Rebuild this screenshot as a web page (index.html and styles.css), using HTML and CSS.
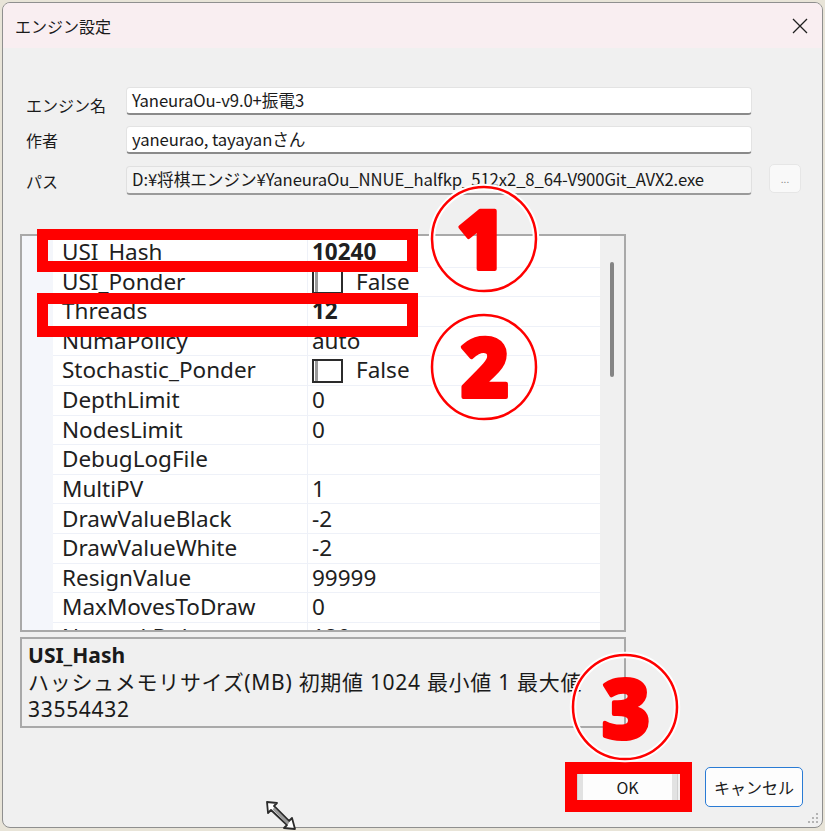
FILE: index.html
```html
<!DOCTYPE html>
<html lang="ja">
<head>
<meta charset="utf-8">
<title>エンジン設定</title>
<link rel="stylesheet" href="styles.css">
</head>
<body>
<div class="dialog">
  <div class="titlebar">
    <span class="title">エンジン設定</span>
    <svg class="close" width="16" height="16" viewBox="0 0 16 16"><path d="M1 1 L15 15 M15 1 L1 15" stroke="#1f1f1f" stroke-width="1.3" fill="none"/></svg>
  </div>
  <div class="form">
    <div class="lbl lbl-first">エンジン名</div>
    <div class="input">YaneuraOu-v9.0+振電3</div>
    <div></div>
    <div class="lbl">作者</div>
    <div class="input">yaneurao, tayayanさん</div>
    <div></div>
    <div class="lbl row3">パス</div>
    <div class="input readonly row3">D:¥将棋エンジン¥YaneuraOu_NNUE_halfkp_512x2_8_64-V900Git_AVX2.exe</div>
    <div class="browse row3">...</div>
  </div>
  <div class="grid">
    <div class="rows">
      <div class="row"><div class="g"></div><div class="n">USI_Hash</div><div class="v b">10240</div></div>
      <div class="row"><div class="g"></div><div class="n">USI_Ponder</div><div class="v"><span class="cb"></span>False</div></div>
      <div class="row"><div class="g"></div><div class="n">Threads</div><div class="v b">12</div></div>
      <div class="row"><div class="g"></div><div class="n">NumaPolicy</div><div class="v">auto</div></div>
      <div class="row"><div class="g"></div><div class="n">Stochastic_Ponder</div><div class="v"><span class="cb"></span>False</div></div>
      <div class="row"><div class="g"></div><div class="n">DepthLimit</div><div class="v">0</div></div>
      <div class="row"><div class="g"></div><div class="n">NodesLimit</div><div class="v">0</div></div>
      <div class="row"><div class="g"></div><div class="n">DebugLogFile</div><div class="v"></div></div>
      <div class="row"><div class="g"></div><div class="n">MultiPV</div><div class="v">1</div></div>
      <div class="row"><div class="g"></div><div class="n">DrawValueBlack</div><div class="v">-2</div></div>
      <div class="row"><div class="g"></div><div class="n">DrawValueWhite</div><div class="v">-2</div></div>
      <div class="row"><div class="g"></div><div class="n">ResignValue</div><div class="v">99999</div></div>
      <div class="row"><div class="g"></div><div class="n">MaxMovesToDraw</div><div class="v">0</div></div>
      <div class="row"><div class="g"></div><div class="n">NetworkDelay</div><div class="v">120</div></div>
    </div>
    <div class="scrollbar"><div class="thumb"></div></div>
  </div>
  <div class="desc">
    <div class="desc-title">USI_Hash</div>
    <div class="desc-text">ハッシュメモリサイズ(MB) 初期値 1024 最小値 1 最大値 33554432</div>
  </div>
  <div class="buttons">
    <button class="btn ok">OK</button>
    <button class="btn cancel">キャンセル</button>
  </div>
  <svg class="grip" width="12" height="12" viewBox="0 0 12 12">
    <g fill="#a0a0a0"><circle cx="10" cy="2" r="1"/><circle cx="6" cy="6" r="1"/><circle cx="10" cy="6" r="1"/><circle cx="2" cy="10" r="1"/><circle cx="6" cy="10" r="1"/><circle cx="10" cy="10" r="1"/></g>
  </svg>
</div>

<svg class="annot" width="825" height="831" viewBox="0 0 825 831">
  <g fill="none" stroke="#ff0000" stroke-width="11">
    <rect x="42.5" y="234.5" width="370" height="32"/>
    <rect x="42.5" y="298.5" width="370" height="33"/>
    <rect x="571" y="768" width="115" height="38" stroke-width="12"/>
  </g>
  <g fill="none" stroke="#ffffff" stroke-width="6.5">
    <circle cx="484" cy="239" r="52"/>
    <circle cx="484" cy="367" r="52"/>
    <circle cx="625" cy="707" r="52"/>
  </g>
  <g fill="none" stroke="#ff0000" stroke-width="2.5">
    <circle cx="484" cy="239" r="52"/>
    <circle cx="484" cy="367" r="52"/>
    <circle cx="625" cy="707" r="52"/>
  </g>
  <g class="num">
    <text x="481" y="269">1</text>
    <text x="485" y="397">2</text>
    <text x="626" y="738">3</text>
  </g>
  <g transform="translate(267 802)">
    <path d="M0 0 L10 1 L7 4 L22 19 L25 16 L28 27 L17 26 L20 23 L4 8 L1 11 Z" fill="#ffffff" stroke="#2b2b2b" stroke-width="1.8" stroke-linejoin="round"/>
    <path d="M6.5 6.5 L21.5 21.5" stroke="#9a9a9a" stroke-width="2.5"/>
  </g>
</svg>
</body>
</html>
```

FILE: styles.css
```css
* { box-sizing: border-box; }

body {
  margin: 0;
  width: 825px;
  height: 831px;
  overflow: hidden;
  position: relative;
  background: #e8e4d8;
  font-family: "Noto Sans CJK JP", sans-serif;
  color: #1a1a1a;
}

.dialog {
  margin: 2px 0 0 2px;
  width: 821px;
  height: 826px;
  border: 1px solid #8f8f8f;
  border-radius: 8px;
  background: #f0f0f0;
  display: flex;
  flex-direction: column;
  position: relative;
  overflow: hidden;
}

.titlebar {
  height: 45px;
  flex: none;
  background: #f9eef1;
  display: flex;
  align-items: center;
  justify-content: space-between;
  padding: 0 14px 0 12px;
}

.title {
  font-size: 16px;
  line-height: 1;
}

.form {
  display: grid;
  grid-template-columns: 100px 626px 49px;
  grid-auto-rows: 28px;
  row-gap: 11px;
  padding: 39px 0 0 23px;
  align-items: center;
}

.lbl {
  font-size: 16px;
  line-height: 1;
}

.lbl-first { padding-top: 8px; }

.row3 { margin-top: 3px; }

.input {
  height: 28px;
  background: #ffffff;
  border: 1px solid #e3e3e3;
  border-bottom: 2px solid #8a8a8a;
  border-radius: 4px;
  font-size: 16.7px;
  line-height: 25px;
  padding-left: 5px;
  white-space: nowrap;
  overflow: hidden;
  letter-spacing: -0.1px;
}

.input.readonly {
  height: 29px;
  background: #f4f4f4;
  border-color: #e0e0e0;
  border-bottom-color: #9a9a9a;
}

.browse {
  align-self: start;
  margin: -1px 0 0 17px;
  width: 32px;
  height: 29px;
  background: #f9f9f9;
  border: 1px solid #e6e6e6;
  border-radius: 5px;
  font-size: 10px;
  color: #8a8a8a;
  display: flex;
  align-items: center;
  justify-content: center;
  line-height: 1;
}

.grid {
  margin: 41px 0 0 17px;
  width: 606px;
  height: 398px;
  flex: none;
  border: 2px solid #a9a9a9;
  display: flex;
  background: #ffffff;
}

.rows {
  width: 578px;
  padding-top: 2px;
  overflow: hidden;
  background: linear-gradient(to right, #f4f6fb 31px, #ffffff 31px);
  font-family: "Noto Sans", "Noto Sans CJK JP", sans-serif;
  font-size: 22.5px;
  color: #202020;
}

.row {
  display: grid;
  grid-template-columns: 31px 255px 292px;
  height: 29.62px;
}

.row .g { background: #f4f6fb; }

.row .n,
.row .v {
  border-bottom: 1px solid #eef1f8;
  display: flex;
  align-items: center;
  white-space: nowrap;
  line-height: 1;
}

.row .n {
  padding-left: 9px;
  border-right: 1px solid #eef1f8;
}

.row .v { padding-left: 4px; }

.row .v.b { font-weight: 700; }

.cb {
  display: inline-block;
  width: 31px;
  height: 24px;
  border: 2px solid #2b2b2b;
  box-shadow: inset 1px 0 0 #ffffff, inset 4px 0 0 #9a9a9a;
  background: #ffffff;
  margin-right: 13px;
}

.scrollbar {
  width: 24px;
  background: #f0f0f0;
  display: flex;
  flex-direction: column;
  padding: 26px 0 0 10px;
}

.thumb {
  width: 4px;
  height: 115px;
  border-radius: 2px;
  background: #858585;
}

.desc {
  margin: 5px 0 0 17px;
  width: 606px;
  height: 91px;
  flex: none;
  border: 2px solid #a9a9a9;
  padding: 3px 6px 0 6px;
  font-family: "Noto Sans", "Noto Sans CJK JP", sans-serif;
  font-size: 21px;
  line-height: 27px;
  overflow: hidden;
}

.desc-title { font-weight: 700; }

.desc-text { letter-spacing: 0.7px; }

.buttons {
  margin-top: 39px;
  display: flex;
  justify-content: flex-end;
  gap: 27px;
  padding-right: 19px;
}

.btn {
  height: 40px;
  font-family: "Noto Sans CJK JP", sans-serif;
  font-size: 16px;
  color: #1a1a1a;
  background: #fdfdfd;
  border-radius: 5px;
  padding: 0;
}

.ok {
  width: 101px;
  border: 1px solid #d0d0d0;
  box-shadow: inset 5px 0 0 #e2e2e2, inset -5px 0 0 #e2e2e2;
}

.cancel {
  width: 98px;
  border: 1.5px solid #2a7bd4;
}

.grip {
  position: absolute;
  right: 3px;
  bottom: 3px;
}

.annot {
  position: absolute;
  left: 0;
  top: 0;
  pointer-events: none;
}

.num text {
  font-family: "Noto Sans", "DejaVu Sans", sans-serif;
  font-weight: 900;
  font-size: 82px;
  fill: #ff0000;
  stroke: #ff0000;
  stroke-width: 4px;
  stroke-linejoin: round;
  text-anchor: middle;
}
```
